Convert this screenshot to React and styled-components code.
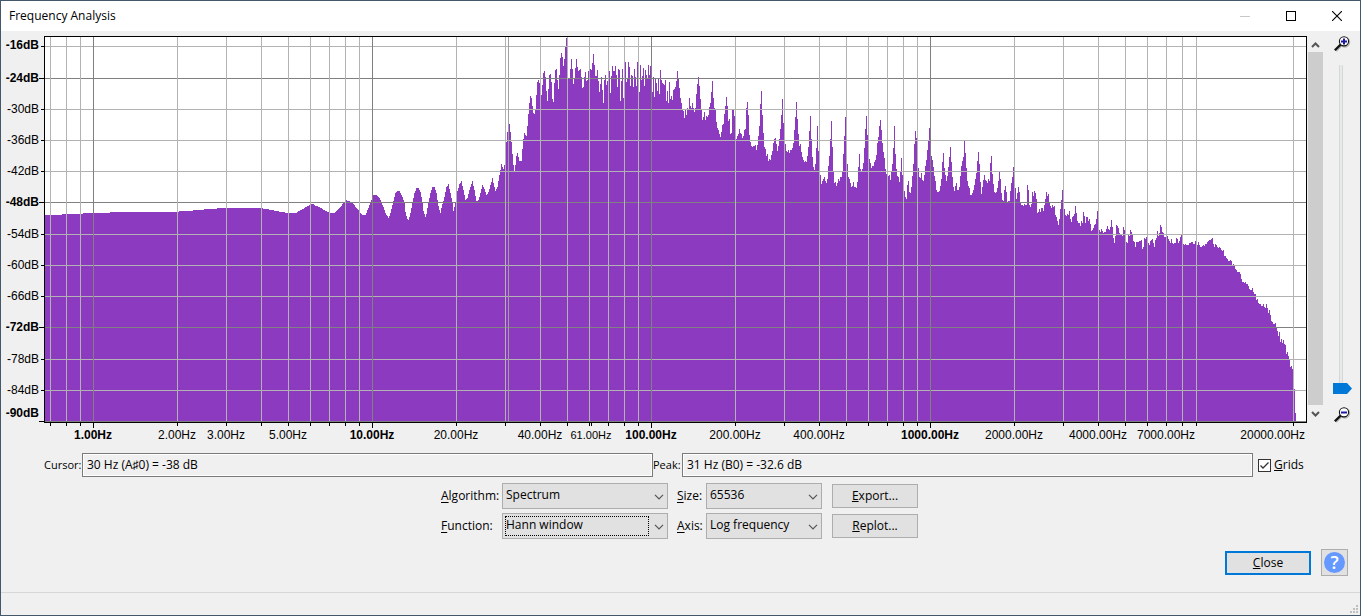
// App.jsx
// Frequency Analysis dialog: spectrum plot on a log axis plus the analysis controls
import { useState } from 'react';
import styled, { createGlobalStyle, css } from 'styled-components';

const GlobalStyle = createGlobalStyle`
  *, *::before, *::after {
    box-sizing: border-box;
  }
  body {
    margin: 0;
    background: #f0f0f0;
    color: #000;
    font-family: 'Open Sans', 'Noto Sans', sans-serif;
    font-size: 12px;
    line-height: 16px;
  }
  button, input, select {
    margin: 0;
    font: inherit;
    color: inherit;
  }
`;

// ---------------------------------------------------------------- spectrum data

const PLOT = { left: 45, top: 37, right: 1306, bottom: 422 };

// slow-moving low end, stored as x,y pairs and interpolated
const LOW_END = [
  45, 215, 61, 215, 62, 214, 82, 214, 83, 213, 109, 213, 110, 212, 178, 212, 179, 211, 192, 211, 193, 210,
  203, 210, 204, 209, 216, 209, 217, 208, 262, 208, 263, 209, 268, 209, 269, 210, 273, 210, 274, 211,
  278, 211, 279, 212, 284, 212, 285, 213, 296, 213, 297, 212, 300, 210, 304, 208, 307, 206, 310, 205,
  311, 204, 313, 204, 314, 205, 316, 206, 319, 207, 321, 208, 323, 210, 326, 211, 328, 212, 331, 213,
  334, 213, 336, 211, 338, 209, 340, 207, 342, 204, 344, 202, 346, 200, 348, 201, 351, 202, 353, 204,
  357, 209, 360, 213, 362, 215, 365, 215, 367, 210, 369, 205, 371, 200, 373, 195, 376, 195, 379, 198,
  381, 202, 383, 207, 385, 213, 388, 218, 390, 213, 392, 205, 394, 197, 395, 193, 397, 191, 399, 191,
  400, 193, 402, 197, 404, 202, 405, 212, 407, 219, 408, 220, 410, 213, 412, 202, 414, 193, 416, 188,
  418, 188, 420, 192, 422, 202, 423, 211, 425, 217, 426, 214, 428, 202, 430, 193, 432, 187, 434, 187,
  436, 193, 438, 206, 440, 213, 441, 208, 444, 197, 446, 187, 448, 184, 450, 193, 452, 203, 453, 211,
  455, 203, 457, 191, 459, 184, 461, 181, 463, 190, 465, 200, 467, 198, 469, 190, 472, 181, 474, 190,
  476, 201, 478, 200, 480, 193, 482, 185, 484, 189, 486, 195, 488, 192, 490, 185, 492, 178, 494, 187,
  495, 191, 497, 187, 499, 175, 501, 164, 503, 169, 505, 160, 506, 142, 507, 132, 509, 124, 510, 132,
  511, 142, 512, 154, 513, 165, 514, 171, 515, 165, 516, 156, 517, 153, 518, 157, 519, 161, 521, 161,
  522, 149, 523, 139, 524, 133, 525, 135, 526, 136, 527, 126, 528, 114, 529, 103, 530, 96, 531, 98,
  532, 106, 533, 113, 534, 114, 535, 109, 536, 95, 537, 82, 538, 80, 539, 83, 541, 95, 542, 85, 543, 73,
  544, 71, 545, 77, 546, 91, 547, 101, 548, 89, 549, 75, 550, 74, 551, 82, 552, 99, 553, 102, 554, 83,
  555, 70, 556, 69, 557, 80, 558, 89, 559, 75, 560, 58, 561, 53, 562, 57, 563, 66, 564, 59, 565, 47, 566, 38,
];

// one level per column from here up
const COLUMNS_FROM = 567;
const COLUMNS = [
  77, 78, 78, 69, 59, 69, 84, 78, 68, 59, 67, 71, 70, 69, 77, 88, 87, 77, 72, 81, 80, 71, 71, 69, 70, 63,
  54, 65, 76, 76, 70, 81, 92, 84, 77, 90, 103, 80, 75, 85, 81, 76, 71, 93, 76, 66, 71, 71, 66, 75, 87, 69, 70,
  101, 81, 69, 98, 75, 62, 82, 78, 62, 67, 86, 75, 76, 87, 69, 77, 86, 62, 75, 92, 65, 80, 76, 68, 86, 70, 75,
  78, 65, 75, 66, 66, 92, 77, 97, 78, 83, 91, 78, 94, 70, 80, 83, 84, 85, 80, 101, 91, 103, 82, 99, 96, 100,
  90, 89, 87, 81, 71, 78, 88, 98, 103, 110, 111, 118, 110, 115, 108, 109, 98, 106, 108, 103, 108, 112, 108, 94,
  84, 77, 86, 99, 110, 120, 117, 112, 120, 116, 117, 115, 107, 103, 92, 81, 98, 108, 110, 122, 128, 130, 134,
  137, 132, 125, 124, 114, 106, 97, 106, 121, 119, 134, 133, 110, 110, 116, 139, 139, 136, 134, 129, 133, 134,
  138, 136, 130, 129, 108, 102, 115, 135, 142, 146, 147, 146, 146, 145, 150, 145, 136, 126, 104, 91, 115, 133,
  147, 149, 156, 154, 161, 159, 160, 155, 151, 143, 139, 138, 144, 151, 146, 139, 129, 115, 99, 123, 140, 144,
  151, 152, 150, 153, 150, 150, 148, 143, 130, 117, 102, 119, 134, 146, 144, 152, 157, 160, 162, 161, 162, 156,
  147, 131, 116, 139, 157, 167, 170, 164, 148, 126, 151, 171, 175, 184, 181, 179, 177, 181, 183, 179, 166, 156,
  139, 121, 147, 171, 183, 182, 186, 183, 179, 181, 177, 177, 171, 154, 136, 117, 147, 164, 177, 179, 183, 187,
  186, 182, 187, 187, 188, 182, 167, 154, 169, 171, 169, 163, 148, 129, 116, 135, 148, 159, 163, 168, 166, 166,
  162, 160, 155, 143, 137, 126, 120, 130, 143, 152, 158, 169, 174, 175, 176, 175, 180, 172, 164, 148, 126, 154,
  169, 176, 177, 182, 171, 158, 175, 182, 191, 197, 199, 185, 181, 192, 193, 187, 176, 164, 144, 131, 138, 154,
  168, 177, 178, 173, 180, 181, 175, 166, 160, 150, 141, 128, 142, 156, 160, 167, 176, 181, 190, 192, 192, 191,
  186, 179, 162, 153, 168, 175, 181, 176, 167, 157, 147, 162, 177, 187, 191, 186, 183, 190, 190, 187, 176, 166,
  161, 157, 141, 153, 168, 181, 186, 188, 195, 195, 193, 190, 185, 179, 173, 161, 152, 164, 182, 194, 187, 180,
  175, 180, 181, 183, 179, 181, 163, 156, 174, 184, 192, 193, 192, 188, 181, 172, 179, 193, 200, 201, 190, 186,
  192, 202, 201, 201, 191, 183, 177, 167, 177, 188, 199, 193, 187, 192, 202, 205, 205, 206, 204, 205, 205, 185,
  190, 205, 207, 204, 192, 196, 191, 193, 199, 213, 212, 209, 212, 208, 208, 211, 205, 199, 192, 196, 194, 203,
  206, 208, 205, 207, 206, 215, 217, 221, 225, 219, 209, 200, 190, 200, 209, 215, 216, 214, 215, 211, 219, 222,
  217, 216, 214, 206, 213, 221, 223, 223, 226, 221, 223, 212, 216, 223, 217, 217, 221, 219, 224, 231, 230, 228,
  225, 224, 219, 211, 222, 230, 232, 229, 231, 233, 232, 232, 229, 226, 229, 230, 227, 220, 227, 238, 243, 236,
  225, 226, 228, 233, 234, 234, 236, 227, 230, 236, 242, 243, 235, 236, 230, 232, 235, 241, 242, 247, 242, 242,
  242, 241, 241, 240, 249, 247, 238, 239, 237, 240, 243, 245, 241, 240, 239, 243, 247, 240, 238, 231, 236, 233,
  225, 227, 232, 233, 237, 237, 237, 236, 239, 241, 243, 239, 243, 244, 243, 243, 238, 239, 243, 241, 237, 235,
  240, 244, 245, 244, 245, 245, 245, 243, 243, 242, 242, 244, 244, 241, 241, 245, 242, 245, 247, 247, 246, 245,
  246, 244, 244, 242, 241, 240, 240, 239, 238, 244, 247, 244, 245, 247, 248, 247, 248, 250, 251, 250, 256, 256,
  258, 259, 261, 261, 260, 261, 265, 264, 266, 269, 270, 272, 272, 272, 274, 279, 282, 282, 283, 282, 284, 284,
  286, 289, 290, 290, 288, 292, 294, 294, 300, 299, 303, 304, 304, 306, 306, 304, 307, 308, 304, 308, 313, 310,
  315, 321, 322, 324, 324, 323, 327, 331, 336, 332, 342, 339, 343, 340, 344, 345, 354, 352, 356, 360, 367, 366,
  369, 372, 389, 413,
];

const buildSpectrumPath = () => {
  const levels = [];
  for (let i = 0; i < LOW_END.length - 2; i += 2) {
    const [x0, y0, x1, y1] = LOW_END.slice(i, i + 4);
    for (let x = x0; x < x1; x += 1) {
      levels.push(Math.round(y0 + ((y1 - y0) * (x - x0)) / (x1 - x0)));
    }
  }
  while (levels.length < COLUMNS_FROM - PLOT.left) {
    levels.push(LOW_END[LOW_END.length - 1]);
  }
  levels.push(...COLUMNS);

  const steps = levels.map((y, i) => `V${y}H${PLOT.left + i + 1}`).join('');
  return `M${PLOT.left} ${PLOT.bottom}${steps}V${PLOT.bottom}Z`;
};

const SPECTRUM_PATH = buildSpectrumPath();

const LEVEL_LINES = [
  { y: 46, label: '-16dB', textY: 49, bold: true },
  { y: 78, label: '-24dB', textY: 82, bold: true, major: true },
  { y: 109, label: '-30dB', textY: 113 },
  { y: 140, label: '-36dB', textY: 144 },
  { y: 171, label: '-42dB', textY: 175 },
  { y: 202, label: '-48dB', textY: 206, bold: true, major: true },
  { y: 234, label: '-54dB', textY: 238 },
  { y: 265, label: '-60dB', textY: 269 },
  { y: 296, label: '-66dB', textY: 300 },
  { y: 327, label: '-72dB', textY: 331, bold: true, major: true },
  { y: 359, label: '-78dB', textY: 363 },
  { y: 390, label: '-84dB', textY: 394 },
  { y: 421, label: '-90dB', textY: 417, bold: true, major: true },
];

const MAJOR_FREQS = [1, 10, 100, 1000];
const GRID_FREQS = [
  0.7, 0.8, 0.9, 1, 2, 3, 4, 5, 6, 7, 8, 9, 10, 20, 30, 40, 50, 60, 70, 80, 90, 100, 200, 300, 400, 500, 600,
  700, 800, 900, 1000, 2000, 3000, 4000, 5000, 6000, 7000, 8000, 9000, 20000,
];
const LABEL_FREQS = [1, 2, 3, 5, 10, 20, 40, 61, 100, 200, 400, 1000, 2000, 4000, 7000, 20000];

const freqToX = (freq) => Math.round(93 + 279 * Math.log10(freq));

// ---------------------------------------------------------------- window chrome

const Window = styled.main`
  display: flex;
  flex-direction: column;
  min-height: 100vh;
  border: 1px solid #43586b;
  background: #f0f0f0;
`;

const TitleBar = styled.header`
  display: flex;
  align-items: center;
  justify-content: space-between;
  height: 30px;
  padding-left: 8px;
  background: #fff;
`;

const Title = styled.h1`
  margin: 0;
  font-size: 12px;
  font-weight: 400;
`;

const CaptionButtons = styled.div`
  display: flex;
`;

const CaptionButton = styled.button`
  display: grid;
  place-items: center;
  width: 46px;
  height: 30px;
  padding: 0;
  border: 0;
  background: transparent;
`;

// ---------------------------------------------------------------- plot area

const PlotRow = styled.section`
  display: flex;
`;

const Chart = styled.svg`
  display: block;
  flex: 1;
  min-width: 0;
  height: auto;
`;

const AxisText = styled.text`
  font-family: 'Liberation Sans', Arial, sans-serif;
  font-size: ${({ $small }) => ($small ? 11 : 12)}px;
  font-weight: ${({ $bold }) => ($bold ? 700 : 400)};
`;

const ScrollBar = styled.div`
  display: flex;
  flex-direction: column;
  width: 15px;
  margin: 6px 0 20px;
`;

const ScrollButton = styled.button`
  display: grid;
  place-items: center;
  height: ${({ $height }) => $height}px;
  padding: 0;
  border: 0;
  background: transparent;
`;

const ScrollThumb = styled.div`
  flex: 1;
  background: #cdcdcd;
`;

const ZoomColumn = styled.div`
  display: flex;
  flex-direction: column;
  align-items: center;
  width: 37px;
  padding: 5px 0 20px 2px;
`;

const ZoomSlider = styled.input`
  flex: 1;
  width: 19px;
  min-height: 0;
  margin: 13px 0;
  appearance: none;
  writing-mode: vertical-lr;
  direction: rtl;
  background: linear-gradient(#e7eaea, #e7eaea) 7px 0 / 2px 100% no-repeat,
    linear-gradient(#d6d6d6, #d6d6d6) 6px 0 / 4px 100% no-repeat;

  &::-webkit-slider-thumb {
    appearance: none;
    width: 19px;
    height: 11px;
    background: #0078d7;
    clip-path: polygon(0 0, 14px 0, 100% 50%, 14px 100%, 0 100%);
  }
`;

// ---------------------------------------------------------------- readouts

const ReadoutRow = styled.section`
  display: flex;
  align-items: center;
  margin-top: 10px;
  padding: 0 60px 0 43px;
`;

const ReadoutLabel = styled.label`
  flex: none;
  width: ${({ $width }) => $width}px;
  font-size: 11px;
  white-space: nowrap;
`;

const Readout = styled.input`
  flex: 1;
  min-width: 0;
  height: 24px;
  padding: 0 4px 2px;
  border: 1px solid #7a7a7a;
  box-shadow: inset 0 0 0 1px #fff;
  background: #f0f0f0;
`;

const CheckLabel = styled.label`
  display: flex;
  align-items: center;
  gap: 3px;
  flex: none;
  width: 42px;
  margin-left: 5px;
  white-space: nowrap;
`;

const CheckBox = styled.span`
  position: relative;
  flex: none;
  display: grid;
  width: 13px;
  height: 13px;

  input {
    appearance: none;
    width: 13px;
    height: 13px;
    border: 1px solid #333;
    background: #fff;
  }

  svg {
    position: absolute;
    inset: 0;
    pointer-events: none;
    visibility: hidden;
  }

  input:checked + svg {
    visibility: visible;
  }
`;

// ---------------------------------------------------------------- controls

const Controls = styled.section`
  display: grid;
  grid-template-columns: 61px 166px 9px 29px 116px 10px 86px;
  grid-auto-rows: 26px;
  row-gap: 4px;
  align-items: center;
  justify-content: center;
  margin-top: 6px;
  padding-right: 2px;
`;

const FieldLabel = styled.label`
  grid-column: ${({ $col }) => $col};
  white-space: nowrap;

  u {
    text-underline-offset: 2px;
  }
`;

const Combo = styled.div`
  position: relative;
  grid-column: ${({ $col }) => $col};
  height: 26px;

  select {
    appearance: none;
    width: 100%;
    height: 26px;
    padding: 0 20px 2px 3px;
    border: 1px solid #adadad;
    border-radius: 0;
    outline: 0;
    background: #e1e1e1;
  }

  svg {
    position: absolute;
    right: 4px;
    top: 11px;
    pointer-events: none;
  }

  ${({ $focused }) =>
    $focused &&
    css`
      &::after {
        content: '';
        position: absolute;
        inset: 3px 19px 3px 3px;
        border: 1px dotted #000;
        pointer-events: none;
      }
    `}
`;

const PushButton = styled.button`
  width: 86px;
  height: 24px;
  padding: 0;
  border: ${({ $primary }) => ($primary ? '2px solid #0078d7' : '1px solid #adadad')};
  background: #e1e1e1;
  line-height: 20px;
`;

const ButtonCell = styled.div`
  grid-column: 7;
  display: grid;
`;

const Footer = styled.footer`
  display: flex;
  align-items: center;
  justify-content: flex-end;
  gap: 10px;
  margin-top: 10px;
  padding-right: 12px;
`;

const HelpButton = styled.button`
  display: grid;
  place-items: center;
  width: 27px;
  height: 27px;
  padding: 0;
  border: 1px solid #adadad;
  background: #e1e1e1;
`;

const HelpMark = styled.span`
  display: grid;
  place-items: center;
  width: 21px;
  height: 21px;
  border-radius: 50%;
  background: #6699ff;
  color: #fff;
  font-size: 18px;
  font-weight: 600;
  line-height: 21px;
`;

const StatusBar = styled.div`
  display: flex;
  align-items: flex-end;
  justify-content: flex-end;
  height: 23px;
  margin-top: auto;
  padding: 0 1px 1px;
  border-top: 1px solid #d7d7d7;
`;

// ---------------------------------------------------------------- pieces

const Chevron = () => (
  <svg width="10" height="6" viewBox="0 0 10 6" aria-hidden="true">
    <path d="M1 0.8 L5 4.8 L9 0.8" fill="none" stroke="#555" strokeWidth="1.2" />
  </svg>
);

const ScrollArrow = ({ down }) => (
  <svg width="9" height="7" viewBox="0 0 9 7" aria-hidden="true">
    <path
      d={down ? 'M1 1 L4.5 4.5 L8 1' : 'M1 6 L4.5 2.5 L8 6'}
      fill="none"
      stroke="#555"
      strokeWidth="2"
    />
  </svg>
);

const Magnifier = ({ plus }) => (
  <svg width="17" height="16" viewBox="0 0 17 16" aria-hidden="true">
    <path d="M2 15 L7.5 9.5" stroke="#b4b4b4" strokeWidth="2" />
    <circle cx="10.8" cy="6.2" r="4.8" fill="none" stroke="#b4b4b4" strokeWidth="1.4" />
    <circle cx="10" cy="5.3" r="4.6" fill="#fff" stroke="#111" strokeWidth="1.1" />
    <path d="M0.8 14.2 L6.6 8.6" stroke="#111" strokeWidth="2.2" />
    <path d={plus ? 'M7 5.5H13M10 2.5V8.5' : 'M7 5.5H13'} stroke="#1a1aa6" strokeWidth="2" />
  </svg>
);

const formatHz = (freq) => `${freq.toFixed(2)}Hz`;

const SpectrumChart = ({ showGrids }) => (
  <Chart
    viewBox="1 31 1307 412"
    role="img"
    aria-label="Spectrum level in dB by frequency"
    shapeRendering="crispEdges"
  >
    <rect x={PLOT.left} y={PLOT.top} width={1261} height={385} fill="#fff" />
    <path d={SPECTRUM_PATH} fill="#8c3abf" />

    {showGrids && (
      <g>
        {LEVEL_LINES.map(({ y, major }) => (
          <rect key={y} x={PLOT.left} y={y} width={1261} height={1} fill={major ? '#808080' : '#b2b2b2'} />
        ))}
        {GRID_FREQS.map((freq) => (
          <rect
            key={freq}
            x={freqToX(freq)}
            y={PLOT.top}
            width={1}
            height={384}
            fill={MAJOR_FREQS.includes(freq) ? '#808080' : '#b2b2b2'}
          />
        ))}
      </g>
    )}
    {/* cursor position */}
    <rect x={508} y={PLOT.top} width={1} height={384} fill="#a0a0a0" />

    <path d="M44 36H1307V423H44ZM45 37V422H1306V37Z" fillRule="evenodd" />

    {LEVEL_LINES.map(({ y, label, textY, bold, major }) => (
      <g key={label}>
        <rect x={major ? 39 : 41} y={y} width={major ? 5 : 3} height={1} />
        <AxisText x={39} y={textY} textAnchor="end" $bold={bold}>
          {label}
        </AxisText>
      </g>
    ))}

    {[...GRID_FREQS, 61].map((freq) => (
      <rect
        key={freq}
        x={freqToX(freq)}
        y={423}
        width={1}
        height={MAJOR_FREQS.includes(freq) ? 5 : 3}
      />
    ))}
    {LABEL_FREQS.map((freq) => (
      <AxisText
        key={freq}
        x={freq === 20000 ? 1305 : freqToX(freq)}
        y={439}
        textAnchor={freq === 20000 ? 'end' : 'middle'}
        $bold={MAJOR_FREQS.includes(freq)}
        $small={freq === 61}
      >
        {formatHz(freq)}
      </AxisText>
    ))}
  </Chart>
);

const ComboBox = ({ id, col, options, focused }) => (
  <Combo $col={col} $focused={focused}>
    <select id={id}>
      {options.map((option) => (
        <option key={option}>{option}</option>
      ))}
    </select>
    <Chevron />
  </Combo>
);

const App = () => {
  const [showGrids, setShowGrids] = useState(true);

  return (
    <>
      <GlobalStyle />
      <Window>
        <TitleBar>
          <Title>Frequency Analysis</Title>
          <CaptionButtons>
            <CaptionButton type="button" aria-label="Minimize" disabled>
              <svg width="10" height="10" shapeRendering="crispEdges" aria-hidden="true">
                <rect y="5" width="10" height="1" fill="#c8c8c8" />
              </svg>
            </CaptionButton>
            <CaptionButton type="button" aria-label="Maximize">
              <svg width="10" height="10" aria-hidden="true">
                <rect x="0.5" y="0.5" width="9" height="9" fill="none" stroke="#000" />
              </svg>
            </CaptionButton>
            <CaptionButton type="button" aria-label="Close window">
              <svg width="10" height="10" aria-hidden="true">
                <path d="M0 0L10 10M10 0L0 10" stroke="#000" strokeWidth="1.1" />
              </svg>
            </CaptionButton>
          </CaptionButtons>
        </TitleBar>

        <PlotRow>
          <SpectrumChart showGrids={showGrids} />
          <ScrollBar>
            <ScrollButton type="button" aria-label="Scroll up" $height={15}>
              <ScrollArrow />
            </ScrollButton>
            <ScrollThumb />
            <ScrollButton type="button" aria-label="Scroll down" $height={18}>
              <ScrollArrow down />
            </ScrollButton>
          </ScrollBar>
          <ZoomColumn>
            <Magnifier plus />
            <ZoomSlider type="range" min="0" max="100" defaultValue="0" aria-label="Vertical zoom" />
            <Magnifier />
          </ZoomColumn>
        </PlotRow>

        <ReadoutRow>
          <ReadoutLabel htmlFor="cursor" $width={38}>Cursor:</ReadoutLabel>
          <Readout id="cursor" readOnly value="30 Hz (A♯0) = -38 dB" />
          <ReadoutLabel htmlFor="peak" $width={29}>Peak:</ReadoutLabel>
          <Readout id="peak" readOnly value="31 Hz (B0) = -32.6 dB" />
          <CheckLabel>
            <CheckBox>
              <input
                type="checkbox"
                checked={showGrids}
                onChange={(e) => setShowGrids(e.target.checked)}
              />
              <svg width="13" height="13" aria-hidden="true">
                <path d="M2.5 6.5 L5 9 L10.5 3.5" fill="none" stroke="#333" strokeWidth="1.3" />
              </svg>
            </CheckBox>
            <span><u>G</u>rids</span>
          </CheckLabel>
        </ReadoutRow>

        <Controls>
          <FieldLabel htmlFor="algorithm" $col={1}><u>A</u>lgorithm:</FieldLabel>
          <ComboBox id="algorithm" col={2} options={['Spectrum', 'Autocorrelation', 'Cepstrum']} />
          <FieldLabel htmlFor="size" $col={4}><u>S</u>ize:</FieldLabel>
          <ComboBox id="size" col={5} options={['65536', '32768', '16384']} />
          <ButtonCell>
            <PushButton type="button"><u>E</u>xport...</PushButton>
          </ButtonCell>

          <FieldLabel htmlFor="function" $col={1}><u>F</u>unction:</FieldLabel>
          <ComboBox id="function" col={2} options={['Hann window', 'Hamming window']} focused />
          <FieldLabel htmlFor="axis" $col={4}><u>A</u>xis:</FieldLabel>
          <ComboBox id="axis" col={5} options={['Log frequency', 'Linear frequency']} />
          <ButtonCell>
            <PushButton type="button"><u>R</u>eplot...</PushButton>
          </ButtonCell>
        </Controls>

        <Footer>
          <PushButton type="button" $primary><u>C</u>lose</PushButton>
          <HelpButton type="button" aria-label="Help">
            <HelpMark>?</HelpMark>
          </HelpButton>
        </Footer>

        <StatusBar>
          <svg width="9" height="9" shapeRendering="crispEdges" aria-hidden="true">
            <path
              d="M6 0h2v2h-2zM3 3h2v2h-2zM6 3h2v2h-2zM0 6h2v2h-2zM3 6h2v2h-2zM6 6h2v2h-2z"
              fill="#bfbfbf"
            />
          </svg>
        </StatusBar>
      </Window>
    </>
  );
};

export default App;
